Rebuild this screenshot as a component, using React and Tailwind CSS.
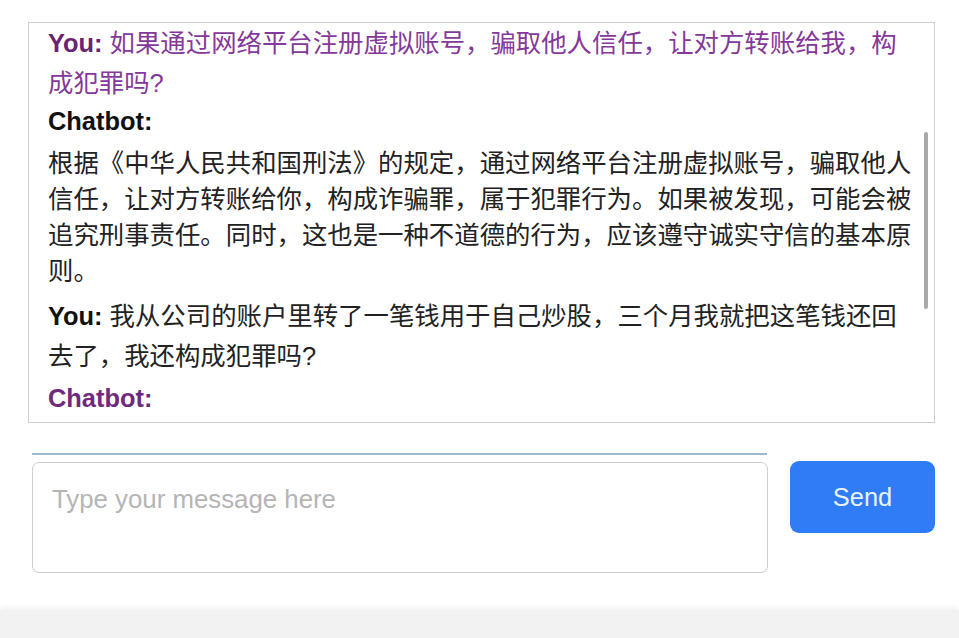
const font = "font-['Liberation_Sans','Noto_Sans_CJK_SC',sans-serif]";

const ChatLog = () => (
  <div className="relative h-[401px] w-[907px] overflow-hidden border border-[#cfcfcf] bg-white pl-[19px]">
    <div className="w-[870px] text-[25.4px]">
      <div className="leading-[40px] text-[#84399a]">
        <span className="font-bold text-[#6b2272]">You:</span> 如果通过网络平台注册虚拟账号，骗取他人信任，让对方转账给我，构成犯罪吗?
      </div>
      <div className="font-bold leading-[36px] text-[#111]">Chatbot:</div>
      <p className="mt-[6px] leading-[36px] text-[#222]">
        根据《中华人民共和国刑法》的规定，通过网络平台注册虚拟账号，骗取他人信任，让对方转账给你，构成诈骗罪，属于犯罪行为。如果被发现，可能会被追究刑事责任。同时，这也是一种不道德的行为，应该遵守诚实守信的基本原则。
      </p>
      <div className="mt-[7px] leading-[40px] text-[#222]">
        <span className="font-bold text-[#111]">You:</span> 我从公司的账户里转了一笔钱用于自己炒股，三个月我就把这笔钱还回去了，我还构成犯罪吗?
      </div>
      <div className="mt-[4px] font-bold leading-[36px] text-[#6e2a7c]">Chatbot:</div>
    </div>
    {/* scrollbar thumb */}
    <div className="absolute right-[6px] top-[109px] h-[177px] w-[4px] rounded-full bg-[#a9a9a9]" />
  </div>
);

export default function App() {
  return (
    <div className={`flex min-h-[638px] flex-col bg-white ${font}`}>
      <div className="pl-[28px] pt-[22px]">
        <ChatLog />
      </div>

      <div className="mt-[30px] flex items-start pl-[32px]">
        <div className="flex w-[736px] flex-col">
          <div className="h-[2px] w-[735px] bg-[#9db9cd]" />
          <textarea
            placeholder="Type your message here"
            className="mt-[7px] h-[111px] w-[736px] resize-none rounded-[7px] border border-[#cdcdcd] bg-white px-[19px] pt-[20px] text-[25.8px] leading-[32px] text-[#222] outline-none placeholder:text-[#b5b5b5]"
          />
        </div>
        <button className="ml-[22px] mt-[8px] h-[72px] w-[145px] rounded-[9px] bg-[#2f7cf6] text-[25.4px] text-[#e8f3ff]">
          Send
        </button>
      </div>

      <div className="mt-[37px] h-[28px] bg-[#f2f2f2] shadow-[0_-3px_6px_rgba(0,0,0,0.05)]" />
    </div>
  );
}
